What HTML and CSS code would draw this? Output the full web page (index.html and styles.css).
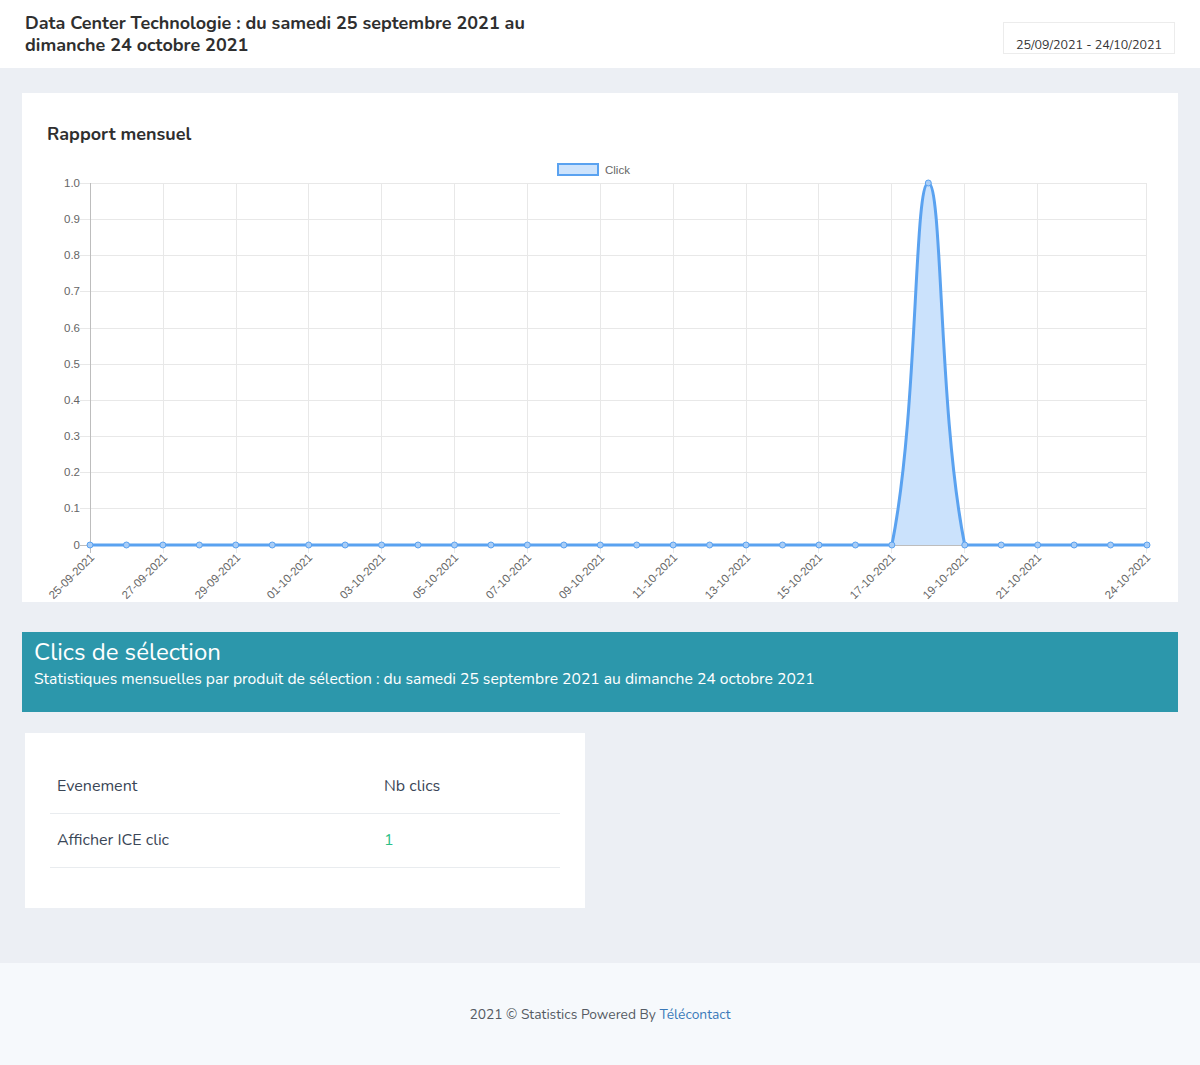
FILE: index.html
```html
<!DOCTYPE html>
<html lang="fr">
<head>
<meta charset="utf-8">
<title>Statistiques</title>
<link rel="stylesheet" href="styles.css">
</head>
<body>
<header class="topbar">
  <h1 class="page-title">Data Center Technologie : du samedi 25 septembre 2021 au<br>dimanche 24 octobre 2021</h1>
  <div class="date-range">25/09/2021 - 24/10/2021</div>
</header>

<main class="content">
  <section class="card chart-card">
    <h2 class="card-title">Rapport mensuel</h2>
    <svg class="chart" width="1156" height="447" viewBox="22 155 1156 447" xmlns="http://www.w3.org/2000/svg">
      <!-- legend -->
      <rect x="558" y="164" width="40" height="11" fill="#cde3fc" stroke="#5aa2f0" stroke-width="2"/>
      <text x="605" y="173.5" class="legend-text">Click</text>

      <!-- horizontal grid -->
      <g stroke="#e8e8e8" stroke-width="1">
        <line x1="80" y1="183.5" x2="1147" y2="183.5"/>
        <line x1="80" y1="219.5" x2="1147" y2="219.5"/>
        <line x1="80" y1="255.5" x2="1147" y2="255.5"/>
        <line x1="80" y1="291.5" x2="1147" y2="291.5"/>
        <line x1="80" y1="328.5" x2="1147" y2="328.5"/>
        <line x1="80" y1="364.5" x2="1147" y2="364.5"/>
        <line x1="80" y1="400.5" x2="1147" y2="400.5"/>
        <line x1="80" y1="436.5" x2="1147" y2="436.5"/>
        <line x1="80" y1="472.5" x2="1147" y2="472.5"/>
        <line x1="80" y1="508.5" x2="1147" y2="508.5"/>
      </g>
      <!-- vertical grid -->
      <g stroke="#e8e8e8" stroke-width="1">
        <line x1="163.5" y1="183" x2="163.5" y2="553"/>
        <line x1="236.5" y1="183" x2="236.5" y2="553"/>
        <line x1="308.5" y1="183" x2="308.5" y2="553"/>
        <line x1="381.5" y1="183" x2="381.5" y2="553"/>
        <line x1="454.5" y1="183" x2="454.5" y2="553"/>
        <line x1="527.5" y1="183" x2="527.5" y2="553"/>
        <line x1="600.5" y1="183" x2="600.5" y2="553"/>
        <line x1="673.5" y1="183" x2="673.5" y2="553"/>
        <line x1="746.5" y1="183" x2="746.5" y2="553"/>
        <line x1="818.5" y1="183" x2="818.5" y2="553"/>
        <line x1="891.5" y1="183" x2="891.5" y2="553"/>
        <line x1="964.5" y1="183" x2="964.5" y2="553"/>
        <line x1="1037.5" y1="183" x2="1037.5" y2="553"/>
        <line x1="1146.5" y1="183" x2="1146.5" y2="553"/>
      </g>
      <!-- axes -->
      <line x1="90.5" y1="183" x2="90.5" y2="553" stroke="#bdbdbd"/>
      <line x1="80" y1="545.5" x2="1147" y2="545.5" stroke="#bdbdbd"/>

      <!-- y labels -->
      <g class="tick-text" text-anchor="end">
        <text x="80" y="187">1.0</text>
        <text x="80" y="223">0.9</text>
        <text x="80" y="259">0.8</text>
        <text x="80" y="295">0.7</text>
        <text x="80" y="332">0.6</text>
        <text x="80" y="368">0.5</text>
        <text x="80" y="404">0.4</text>
        <text x="80" y="440">0.3</text>
        <text x="80" y="476">0.2</text>
        <text x="80" y="512">0.1</text>
        <text x="80" y="549">0</text>
      </g>

      <!-- x labels -->
      <g class="tick-text" text-anchor="end">
        <text transform="translate(93 556) rotate(-45)" y="3">25-09-2021</text>
        <text transform="translate(166 556) rotate(-45)" y="3">27-09-2021</text>
        <text transform="translate(239 556) rotate(-45)" y="3">29-09-2021</text>
        <text transform="translate(311 556) rotate(-45)" y="3">01-10-2021</text>
        <text transform="translate(384 556) rotate(-45)" y="3">03-10-2021</text>
        <text transform="translate(457 556) rotate(-45)" y="3">05-10-2021</text>
        <text transform="translate(530 556) rotate(-45)" y="3">07-10-2021</text>
        <text transform="translate(603 556) rotate(-45)" y="3">09-10-2021</text>
        <text transform="translate(676 556) rotate(-45)" y="3">11-10-2021</text>
        <text transform="translate(749 556) rotate(-45)" y="3">13-10-2021</text>
        <text transform="translate(821 556) rotate(-45)" y="3">15-10-2021</text>
        <text transform="translate(894 556) rotate(-45)" y="3">17-10-2021</text>
        <text transform="translate(967 556) rotate(-45)" y="3">19-10-2021</text>
        <text transform="translate(1040 556) rotate(-45)" y="3">21-10-2021</text>
        <text transform="translate(1149 556) rotate(-45)" y="3">24-10-2021</text>
      </g>

      <!-- data area -->
      <path d="M90,545 L891.86,545 C918.36,413.4 913.73,183 928.31,183 C942.89,183 938.26,413.4 964.76,545 L1147,545 Z" fill="#cbe2fc"/>
      <path d="M90,545 L891.86,545 C918.36,413.4 913.73,183 928.31,183 C942.89,183 938.26,413.4 964.76,545 L1147,545" fill="none" stroke="#5aa2f0" stroke-width="3" stroke-linejoin="round"/>

      <!-- points -->
      <g fill="#a8cdf7" stroke="#5aa2f0" stroke-width="1">
        <circle cx="90" cy="545" r="3"/>
        <circle cx="126.45" cy="545" r="3"/>
        <circle cx="162.9" cy="545" r="3"/>
        <circle cx="199.34" cy="545" r="3"/>
        <circle cx="235.79" cy="545" r="3"/>
        <circle cx="272.24" cy="545" r="3"/>
        <circle cx="308.69" cy="545" r="3"/>
        <circle cx="345.14" cy="545" r="3"/>
        <circle cx="381.59" cy="545" r="3"/>
        <circle cx="418.03" cy="545" r="3"/>
        <circle cx="454.48" cy="545" r="3"/>
        <circle cx="490.93" cy="545" r="3"/>
        <circle cx="527.38" cy="545" r="3"/>
        <circle cx="563.83" cy="545" r="3"/>
        <circle cx="600.28" cy="545" r="3"/>
        <circle cx="636.72" cy="545" r="3"/>
        <circle cx="673.17" cy="545" r="3"/>
        <circle cx="709.62" cy="545" r="3"/>
        <circle cx="746.07" cy="545" r="3"/>
        <circle cx="782.52" cy="545" r="3"/>
        <circle cx="818.97" cy="545" r="3"/>
        <circle cx="855.41" cy="545" r="3"/>
        <circle cx="891.86" cy="545" r="3"/>
        <circle cx="928.31" cy="183" r="3"/>
        <circle cx="964.76" cy="545" r="3"/>
        <circle cx="1001.21" cy="545" r="3"/>
        <circle cx="1037.66" cy="545" r="3"/>
        <circle cx="1074.1" cy="545" r="3"/>
        <circle cx="1110.55" cy="545" r="3"/>
        <circle cx="1147" cy="545" r="3"/>
      </g>
    </svg>
  </section>

  <section class="banner">
    <h2 class="banner-title">Clics de sélection</h2>
    <p class="banner-sub">Statistiques mensuelles par produit de sélection : du samedi 25 septembre 2021 au dimanche 24 octobre 2021</p>
  </section>

  <section class="card table-card">
    <table class="stats-table">
      <thead>
        <tr><th class="col-event">Evenement</th><th>Nb clics</th></tr>
      </thead>
      <tbody>
        <tr><td>Afficher ICE clic</td><td class="count">1</td></tr>
      </tbody>
    </table>
  </section>
</main>

<footer class="footer">
  2021 © Statistics Powered By <a href="#" class="footer-link">Télécontact</a>
</footer>
</body>
</html>
```

FILE: styles.css
```css
* { box-sizing: border-box; }

html, body {
  margin: 0;
  padding: 0;
}

body {
  background: #eceff4;
  font-family: "Nunito", "Open Sans", "Noto Sans", sans-serif;
  color: #343a40;
}

.topbar {
  background: #ffffff;
  height: 68px;
  padding: 12px 25px 0 25px;
  display: flex;
  justify-content: space-between;
  align-items: flex-start;
}

.page-title {
  margin: 0;
  font-size: 18px;
  line-height: 22px;
  font-weight: 700;
  color: #2f2f2f;
}

.date-range {
  margin-top: 10px;
  width: 172px;
  height: 32px;
  border: 1px solid #ececec;
  font-size: 12.5px;
  color: #333;
  padding: 14px 0 0 12px;
  line-height: 16px;
}

.content {
  padding: 25px 22px 55px 22px;
}

.card {
  background: #ffffff;
}

.chart-card {
  height: 509px;
  padding-top: 29px;
}

.card-title {
  margin: 0 0 0 25px;
  font-size: 18px;
  line-height: 24px;
  font-weight: 700;
  color: #2f2f2f;
}

.chart {
  display: block;
  margin-top: 9px;
  overflow: visible;
}

.legend-text {
  font-family: "Liberation Sans", Arial, sans-serif;
  font-size: 11.5px;
  fill: #666666;
}

.tick-text {
  font-family: "Liberation Sans", Arial, sans-serif;
  font-size: 11.5px;
  fill: #666666;
}

.banner {
  margin-top: 30px;
  height: 80px;
  background: #2c97ab;
  color: #ffffff;
  padding: 6px 12px 0 12px;
}

.banner-title {
  margin: 0;
  font-size: 24px;
  line-height: 29px;
  font-weight: 400;
}

.banner-sub {
  margin: 2px 0 0 0;
  font-size: 15.7px;
  line-height: 20px;
}

.table-card {
  margin: 21px 0 0 3px;
  width: 560px;
  height: 175px;
  padding: 26px 25px 0 25px;
}

.stats-table {
  width: 100%;
  border-collapse: collapse;
  font-size: 16px;
  color: #3a4656;
}

.stats-table th,
.stats-table td {
  text-align: left;
  font-weight: 400;
  padding: 0 7px;
  height: 54px;
  vertical-align: middle;
  border-bottom: 1px solid #e9ecef;
}

.col-event {
  width: 327px;
}

.count {
  color: #2bbf88;
}

.footer {
  background: #f6f9fc;
  height: 102px;
  text-align: center;
  padding-top: 42px;
  font-size: 13.8px;
  line-height: 20px;
  color: #555b63;
}

.footer-link {
  color: #3a79b9;
  text-decoration: none;
}
```
